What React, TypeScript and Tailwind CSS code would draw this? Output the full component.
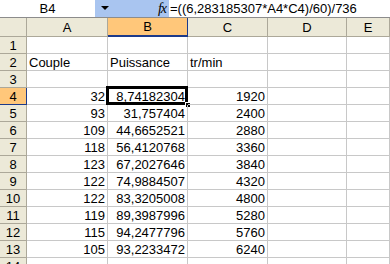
import React from 'react';

const cols = [
  { label: 'A', w: 'w-[81px]' },
  { label: 'B', w: 'w-[80px]' },
  { label: 'C', w: 'w-[80px]' },
  { label: 'D', w: 'w-[79px]' },
  { label: 'E', w: 'flex-1' },
];

const data: Record<number, string[]> = {
  2: ['Couple', 'Puissance', 'tr/min'],
  4: ['32', '8,74182304', '1920'],
  5: ['93', '31,757404', '2400'],
  6: ['109', '44,6652521', '2880'],
  7: ['118', '56,4120768', '3360'],
  8: ['123', '67,2027646', '3840'],
  9: ['122', '74,9884507', '4320'],
  10: ['122', '83,3205008', '4800'],
  11: ['119', '89,3987996', '5280'],
  12: ['115', '94,2477796', '5760'],
  13: ['105', '93,2233472', '6240'],
};

const rows = Array.from({ length: 14 }, (_, i) => i + 1);

export default function App() {
  return (
    <div className="w-[390px] h-[264px] overflow-hidden bg-white text-[13px] leading-none text-black" style={{ fontFamily: '"Liberation Sans", Arial, sans-serif' }}>
      {/* Formula bar */}
      <div className="flex h-[18px] bg-[#a9c5f0] border-b border-[#8c8c8c]">
        <div className="w-[95px] bg-white flex items-center justify-center">B4</div>
        <div className="w-[20px] flex items-center justify-center">
          <svg width="8" height="5" viewBox="0 0 8 5"><path d="M0 0h8L4 4z" fill="#000" /></svg>
        </div>
        <div className="w-[54px] flex items-center justify-end pr-[3px]">
          <span className="italic text-[14px] tracking-[-1px]" style={{ fontFamily: '"Liberation Serif", serif' }}>fx</span>
        </div>
        <div className="flex-1 bg-white flex items-center pl-[1px] whitespace-nowrap">=((6,283185307*A4*C4)/60)/736</div>
      </div>

      {/* Column headers */}
      <div className="flex h-[19px] bg-[#ece9d8] border-b border-[#aca899]">
        <div className="w-[27px] border-r border-[#aca899]" />
        {cols.map((c) => (
          <div
            key={c.label}
            className={`${c.w} shrink-0 flex items-center justify-center border-r ${
              c.label === 'B' ? 'bg-[#ffc77a] border-[#1c3a8a] border-b-2 border-b-[#1c3a8a] -mb-px' : 'border-[#aca899]'
            }`}
          >
            {c.label}
          </div>
        ))}
      </div>

      {/* Rows */}
      {rows.map((r) => {
        const vals = data[r];
        return (
          <div key={r} className="flex h-[17px]">
            <div
              className={`w-[27px] shrink-0 flex items-center justify-center border-r border-b ${
                r === 4 ? 'bg-[#ffc77a] border-r-[#1c3a8a] border-b-[#1c3a8a]' : 'bg-[#ece9d8] border-[#aca899]'
              }`}
            >
              {r}
            </div>
            {cols.map((c, ci) => {
              const v = vals ? vals[ci] : undefined;
              const left = r === 2;
              const selected = r === 4 && ci === 1;
              return (
                <div
                  key={c.label}
                  className={`${c.w} shrink-0 relative flex items-center border-r border-b border-[#c8c8c8] whitespace-nowrap ${
                    left ? 'justify-start pl-[2px]' : 'justify-end pr-[2px]'
                  }`}
                >
                  {v}
                  {selected && (
                    <>
                      <div className="absolute -left-[2px] -top-[2px] -right-[1px] -bottom-[1px] border-[3px] border-black" />
                      <div className="absolute -right-[4px] -bottom-[4px] w-[6px] h-[6px] bg-black border border-white" />
                    </>
                  )}
                </div>
              );
            })}
          </div>
        );
      })}
    </div>
  );
}
